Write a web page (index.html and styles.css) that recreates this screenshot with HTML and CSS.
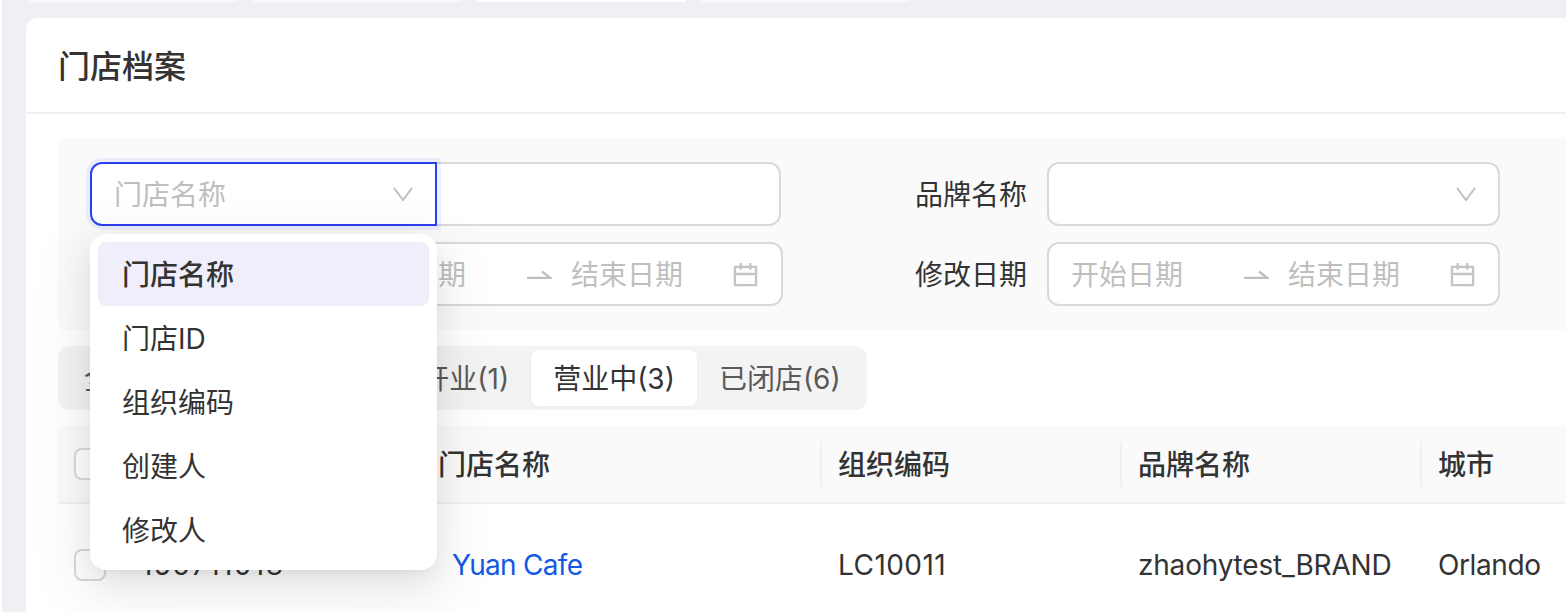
FILE: index.html
```html
<!DOCTYPE html>
<html lang="zh-CN">
<head>
<meta charset="utf-8">
<title>门店档案</title>
<link rel="stylesheet" href="styles.css">
</head>
<body>
<div class="page">
  <div class="nav-tabs">
    <div class="nav-tab"></div>
    <div class="nav-tab"></div>
    <div class="nav-tab nav-tab-active"></div>
    <div class="nav-tab"></div>
  </div>
  <main class="card">
    <h1 class="card-title">门店档案</h1>
    <div class="card-body">
      <section class="filters">
        <div class="filter-cell filter-cell-a">
          <div class="select select-focused">
            <span class="placeholder">门店名称</span>
            <svg class="chevron" viewBox="0 0 20 14" width="20" height="14"><polyline points="1,1 10,13 19,1"/></svg>
            <ul class="dropdown">
              <li class="option option-active">门店名称</li>
              <li class="option">门店ID</li>
              <li class="option">组织编码</li>
              <li class="option">创建人</li>
              <li class="option">修改人</li>
            </ul>
          </div>
          <div class="text-input"></div>
        </div>
        <div class="filter-cell">
          <label class="filter-label">品牌名称</label>
          <div class="select select-plain">
            <svg class="chevron" viewBox="0 0 20 14" width="20" height="14"><polyline points="1,1 10,13 19,1"/></svg>
          </div>
        </div>
        <div class="filter-cell">
          <label class="filter-label">创建日期</label>
          <div class="date-range">
            <span class="placeholder date-start">开始日期</span>
            <svg class="date-arrow" viewBox="0 0 26 9" width="26" height="9"><path d="M1 8H24.5L16 1.5"/></svg>
            <span class="placeholder date-end">结束日期</span>
            <svg class="date-icon" viewBox="0 0 26 26" width="25" height="25"><path d="M2 5H24V24H2ZM2 12.5H24M8 1V8M18 1V8"/></svg>
          </div>
        </div>
        <div class="filter-cell">
          <label class="filter-label">修改日期</label>
          <div class="date-range">
            <span class="placeholder date-start">开始日期</span>
            <svg class="date-arrow" viewBox="0 0 26 9" width="26" height="9"><path d="M1 8H24.5L16 1.5"/></svg>
            <span class="placeholder date-end">结束日期</span>
            <svg class="date-icon" viewBox="0 0 26 26" width="25" height="25"><path d="M2 5H24V24H2ZM2 12.5H24M8 1V8M18 1V8"/></svg>
          </div>
        </div>
      </section>

      <div class="status-tabs">
        <div class="status-tab">全部(11)</div>
        <div class="status-tab">筹建中(0)</div>
        <div class="status-tab">待开业(1)</div>
        <div class="status-tab status-tab-active">营业中(3)</div>
        <div class="status-tab">已闭店(6)</div>
      </div>

      <div class="table">
        <div class="table-row table-head">
          <div class="cell cell-check"><span class="checkbox"></span></div>
          <div class="cell">门店ID</div>
          <div class="cell cell-sep">门店名称</div>
          <div class="cell cell-sep">组织编码</div>
          <div class="cell cell-sep">品牌名称</div>
          <div class="cell cell-sep">城市</div>
        </div>
        <div class="table-row table-data">
          <div class="cell cell-check"><span class="checkbox"></span></div>
          <div class="cell cell-id">156711018</div>
          <div class="cell cell-name"><a class="link">Yuan Cafe</a></div>
          <div class="cell cell-code">LC10011</div>
          <div class="cell cell-brand">zhaohytest_BRAND</div>
          <div class="cell cell-city">Orlando</div>
        </div>
      </div>
    </div>
  </main>
</div>
</body>
</html>
```
FILE: styles.css
```css
* { box-sizing: border-box; }
html, body { margin: 0; height: 100%; overflow: hidden; background: #fff; }
body {
  padding-left: 2px;
  font-family: Inter, "Noto Sans CJK SC", sans-serif;
  font-size: 28px;
  line-height: 40px;
  color: #333;
}
.page {
  height: 612px;
  background: #eff0f4;
  padding-left: 24px;
  overflow: hidden;
}
.nav-tabs { display: flex; height: 2px; padding-left: 2px; margin-bottom: 16px; }
.nav-tab { width: 210px; margin-right: 14px; background: #f7f8f9; border-radius: 0 0 8px 8px; }
.nav-tab-active { background: #fff; }
.card { background: #fff; border-radius: 12px 0 0 0; height: 700px; }
.card-title {
  margin: 0;
  height: 96px;
  padding: 0 32px;
  border-bottom: 2px solid #f0f0f0;
  font-size: 32px;
  font-weight: 500;
  line-height: 98px;
  color: #333;
}
.card-body { padding: 24px 0 0 32px; }
.filters {
  display: grid;
  grid-template-columns: 693px 717px;
  grid-auto-rows: 64px;
  row-gap: 16px;
  height: 192px;
  padding: 24px 0 0 32px;
  background: #fafafa;
  border-radius: 8px 0 0 8px;
}
.filter-cell { display: flex; justify-content: flex-end; align-items: center; }
.filter-cell-a { justify-content: flex-start; }
.filter-label { margin-right: 20px; padding-top: 2px; white-space: nowrap; color: #333; }
.placeholder { padding-top: 2px; color: #bfbfbf; white-space: nowrap; }
.select {
  position: relative;
  display: flex;
  align-items: center;
  height: 64px;
  background: #fff;
  border: 2px solid #d9d9d9;
  border-radius: 12px;
  padding: 0 22px;
}
.select-focused {
  width: 347px;
  border-color: #2b3ff0;
  border-radius: 12px 0 0 12px;
  box-shadow: 0 0 0 4px rgba(43, 63, 240, .07);
  z-index: 2;
}
.select-plain { width: 453px; }
.chevron { position: absolute; right: 22px; top: 23px; fill: none; stroke: #bfbfbf; stroke-width: 2; }
.text-input {
  width: 344px;
  height: 64px;
  background: #fff;
  border: 2px solid #d9d9d9;
  border-left: 0;
  border-radius: 0 12px 12px 0;
}
.date-range {
  display: flex;
  align-items: center;
  width: 453px;
  height: 64px;
  background: #fff;
  border: 2px solid #d9d9d9;
  border-radius: 12px;
  padding-left: 22px;
}
.date-arrow { margin: 1px 19px 0 60px; fill: none; stroke: #bfbfbf; stroke-width: 2.4; }
.date-icon { margin: 0 0 0 50px; fill: none; stroke: #c4c4c4; stroke-width: 2.4; }
.dropdown {
  position: absolute;
  left: -2px;
  right: -2px;
  top: 70px;
  z-index: 10;
  margin: 0;
  padding: 8px;
  list-style: none;
  background: #fff;
  border-radius: 16px;
  box-shadow: 0 12px 32px 0 rgba(0, 0, 0, .08), 0 6px 12px -8px rgba(0, 0, 0, .12), 0 18px 56px 16px rgba(0, 0, 0, .05);
}
.option { height: 64px; padding: 0 24px; line-height: 66px; border-radius: 8px; color: #333; }
.option-active { background: #f0eefb; font-weight: 500; }
.status-tabs {
  display: inline-flex;
  height: 64px;
  margin-top: 16px;
  padding: 4px;
  background: #f3f3f3;
  border-radius: 12px;
  vertical-align: top;
}
.status-tab { height: 56px; padding: 0 22px; line-height: 58px; color: #595959; white-space: nowrap; border-radius: 8px; }
.status-tab-active { background: #fff; color: #333; box-shadow: 0 1px 3px rgba(0, 0, 0, .04); }
.table { margin-top: 16px; }
.table-row {
  display: grid;
  grid-template-columns: 66px 297px 400px 300px 300px 1fr;
  align-items: center;
}
.table-head {
  height: 78px;
  padding-top: 2px;
  background: #fafafa;
  border-bottom: 2px solid #f0f0f0;
  font-weight: 500;
  border-radius: 8px 0 0 0;
}
.table-data { height: 122px; }
.cell { position: relative; padding-left: 17px; white-space: nowrap; }
.cell-check { padding-left: 16px; display: flex; }
.table-head .cell-check { margin-top: -2px; }
.cell-name { padding-left: 31px; }
.cell-id { letter-spacing: 1.4px; }
.cell-code { letter-spacing: .45px; }
.cell-brand { letter-spacing: -.2px; }
.cell-city { letter-spacing: -.4px; }
.cell-sep::before {
  content: "";
  position: absolute;
  left: -1px;
  top: -3px;
  width: 2px;
  height: 45px;
  background: #f0f0f0;
}
.checkbox { display: block; width: 32px; height: 32px; background: #fff; border: 2px solid #d9d9d9; border-radius: 8px; }
.link { color: #1458e6; letter-spacing: -.7px; }
```
